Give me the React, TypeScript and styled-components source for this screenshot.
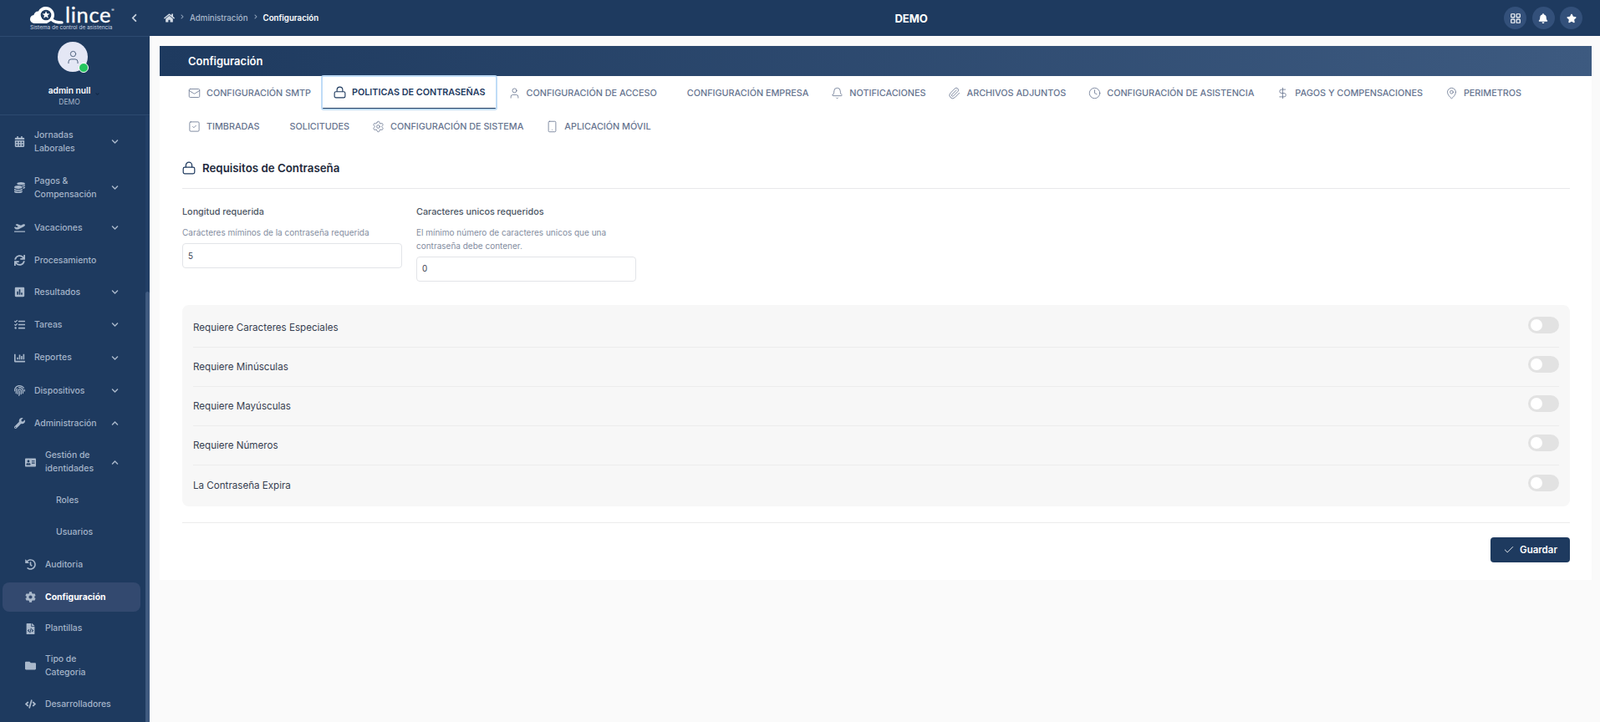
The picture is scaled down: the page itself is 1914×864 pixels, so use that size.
import React from 'react';
import styled, { createGlobalStyle } from 'styled-components';
import {
  Bell, Check, Clock, DollarSign, LayoutGrid, Mail, MapPin, Paperclip, Settings, Smartphone, SquareCheck, User,
} from 'lucide-react';
import {
  FaAddressCard, FaBell, FaCalendarAlt, FaChartBar, FaChevronDown, FaChevronLeft, FaChevronRight, FaChevronUp, FaCode, FaCog,
  FaCoins, FaFileCode, FaFingerprint, FaFolder, FaHistory, FaHome, FaPlaneDeparture, FaPoll, FaStar, FaSync, FaTasks, FaWrench,
} from 'react-icons/fa';

const GlobalStyle = createGlobalStyle`
  html, body { margin: 0; height: 100%; overflow: hidden; background: #fafafa; }
  * { box-sizing: border-box; }
  body { font-family: Inter, "Liberation Sans", sans-serif; }
`;

const Page = styled.div`
  width: 1914px;
  height: 864px;
  display: flex;
  flex-direction: column;
  overflow: hidden;
`;

// --- Top bar ---
const TopBar = styled.header`
  height: 43px;
  flex: none;
  background: #1e3a5f;
  display: flex;
  align-items: center;
  justify-content: space-between;
  padding-right: 21px;
`;

const TopLeft = styled.div`
  display: flex;
  align-items: center;
`;

const LogoBox = styled.div`
  width: 179px;
  padding-left: 36px;
  display: flex;
  flex-direction: column;
  position: relative;
  height: 43px;
`;

const LogoRow = styled.div`
  display: flex;
  align-items: flex-start;
  height: 29px;
  padding-top: 8px;
`;

const LogoWord = styled.span`
  font-family: Lato, sans-serif;
  font-weight: 400;
  font-size: 25.5px;
  line-height: 20px;
  letter-spacing: 0.7px;
  color: #fff;
  -webkit-text-stroke: 0.3px #fff;
  margin: -1px 0 0 2px;
`;

const LogoMark = styled.span`
  font-size: 5px;
  line-height: 6px;
  color: #fff;
  margin-top: 1px;
`;

const LogoTag = styled.span`
  font-size: 6.45px;
  line-height: 8px;
  color: #c9d3e0;
  white-space: nowrap;
`;

const CollapseBtn = styled.span`
  position: absolute;
  left: 155px;
  top: 16px;
  color: #c6d0dd;
  display: flex;
  font-size: 11px;
`;

const Crumbs = styled.nav`
  display: flex;
  align-items: center;
  margin-left: 17px;
  font-size: 9.7px;
  font-weight: 500;
  color: #a9b8cb;
`;

const CrumbSep = styled.span`
  display: flex;
  margin: 0 6px;
  font-size: 6px;
  color: #8da0b8;
  transform: translateY(-2px);
`;

const CrumbNow = styled.span`
  color: #fff;
  font-weight: 600;
`;

const HomeIcon = styled(FaHome)`
  font-size: 13px;
  color: #d4dce6;
`;

const TopTitle = styled.div`
  color: #fff;
  font-weight: 700;
  font-size: 13px;
`;

const TopActions = styled.div`
  display: flex;
  gap: 6.5px;
`;

const RoundBtn = styled.span`
  width: 27px;
  height: 27px;
  border-radius: 50%;
  background: #33507a;
  color: #fff;
  display: flex;
  align-items: center;
  justify-content: center;
  font-size: 12px;
`;

const Body = styled.div`
  flex: 1;
  display: flex;
  min-height: 0;
`;

// --- Sidebar ---
const Sidebar = styled.aside`
  width: 179px;
  flex: none;
  background: #1e3a5f;
  border-top: 1px solid #2d4a70;
  display: flex;
  flex-direction: column;
  position: relative;
  overflow: hidden;
`;

const ScrollTrack = styled.div`
  position: absolute;
  right: 0;
  top: 95px;
  bottom: 0;
  width: 5px;
  background: #223f66;
`;

const ScrollThumb = styled.div`
  position: absolute;
  left: 0;
  top: 210px;
  bottom: 0;
  width: 5px;
  background: #3f5a80;
  border-radius: 3px 3px 0 0;
`;

const UserBox = styled.div`
  height: 94px;
  flex: none;
  border-bottom: 1px solid #2d4a70;
  display: flex;
  flex-direction: column;
  align-items: center;
  padding: 6px 13px 0 0;
`;

const Avatar = styled.div`
  width: 36px;
  height: 36px;
  margin-left: 8px;
  border-radius: 50%;
  background: #e4e7f5;
  color: #475b78;
  display: flex;
  align-items: center;
  justify-content: center;
  position: relative;
`;

const OnlineDot = styled.span`
  position: absolute;
  right: -1px;
  bottom: -1px;
  width: 12px;
  height: 12px;
  border-radius: 50%;
  background: #22c55e;
  border: 1px solid #fff;
`;

const UserName = styled.div`
  margin-top: 15px;
  color: #fff;
  font-size: 10.2px;
  line-height: 14px;
  font-weight: 600;
  position: relative;
`;

const NameCaret = styled(FaChevronDown)`
  position: absolute;
  right: -11px;
  top: 9px;
  font-size: 5px;
  color: #0f2440;
`;

const UserOrg = styled.div`
  color: #a9b8cb;
  font-size: 8.5px;
  line-height: 14px;
`;

const Menu = styled.nav`
  padding-top: 4px;
  display: flex;
  flex-direction: column;
`;

const MenuItem = styled.div<{ $level?: number; $h: number; $active?: boolean }>`
  height: ${p => p.$h}px;
  flex: none;
  display: flex;
  align-items: center;
  padding-left: ${p => (p.$level === 2 ? 67 : p.$level === 1 ? 29 : 16)}px;
  color: ${p => (p.$active ? '#fff' : '#a4b4c9')};
  font-size: 10.4px;
  line-height: 16px;
  font-weight: ${p => (p.$active ? 700 : 500)};
  position: relative;
`;

const ActiveBg = styled.span`
  position: absolute;
  left: 3px;
  top: 2px;
  bottom: 2px;
  width: 165px;
  background: #33496f;
  border-radius: 8px;
`;

const MenuIcon = styled.span`
  width: 14px;
  height: 14px;
  margin-right: 11px;
  display: flex;
  align-items: center;
  justify-content: center;
  font-size: 13px;
  color: #a9b8cb;
  flex: none;
  position: relative;
`;

const MenuLabel = styled.span`
  position: relative;
  white-space: pre-line;
`;

const MenuCaret = styled.span`
  position: absolute;
  left: 133px;
  top: 50%;
  margin-top: -4.5px;
  display: flex;
  font-size: 9px;
  color: #a9b8cb;
`;

// --- Main area ---
const Main = styled.main`
  flex: 1;
  padding: 12px 10px 0 12px;
  background: #fafafa;
`;

const Card = styled.section`
  background: #fff;
  height: 639px;
`;

const CardHeader = styled.div`
  height: 36px;
  padding-left: 34px;
  display: flex;
  align-items: center;
  color: #fff;
  font-size: 13px;
  font-weight: 600;
  background: linear-gradient(90deg, #1e3a5f 0%, #3d5a80 100%);
`;

const TabBar = styled.div`
  display: flex;
  flex-wrap: wrap;
  padding-left: 20.5px;
`;

const Tab = styled.div<{ $active?: boolean }>`
  height: 40px;
  padding: 0 13.5px;
  display: flex;
  align-items: center;
  gap: 7px;
  font-size: 10.8px;
  white-space: nowrap;
  color: ${p => (p.$active ? '#1e3a5f' : '#66748f')};
  font-weight: ${p => (p.$active ? 600 : 500)};
  ${p => p.$active && `
    outline: 2px solid #bfdcf7;
    outline-offset: -1px;
    border-bottom: 2px solid #1e3a5f;
    border-radius: 2px;
  `}
`;

const NoIconGap = styled.span`
  width: 2px;
`;

const Content = styled.div`
  padding: 0 26px 0 27px;
  margin-top: 10px;
`;

const SectionTitle = styled.h3`
  margin: 0;
  height: 45px;
  padding-bottom: 4px;
  display: flex;
  align-items: center;
  gap: 8px;
  font-size: 13.3px;
  font-weight: 600;
  color: #1e293b;
  border-bottom: 1px solid #e8e8ea;
`;

const FieldRow = styled.div`
  display: flex;
  gap: 17px;
  margin-top: 20px;
  align-items: flex-start;
`;

const Field = styled.div`
  width: 263px;
`;

const FieldLabel = styled.label`
  display: block;
  font-size: 10.8px;
  line-height: 16px;
  font-weight: 500;
  color: #4b5563;
`;

const FieldHint = styled.p`
  margin: 9px 0 4.5px;
  font-size: 10px;
  line-height: 15.5px;
  color: #838da0;
`;

const NumberInput = styled.input`
  display: block;
  width: 100%;
  height: 30px;
  padding: 0 6px;
  border: 1px solid #e2e4e8;
  border-radius: 4px;
  background: #fff;
  color: #374151;
  font: 400 9.8px Inter, sans-serif;
  outline: none;
`;

const TogglePanel = styled.div`
  margin-top: 28.5px;
  background: #f7f7f7;
  border-radius: 8px;
  padding: 4px 13px 2px;
`;

const ToggleRow = styled.div`
  height: 47px;
  display: flex;
  align-items: center;
  justify-content: space-between;
  font-size: 11.6px;
  color: #374151;
  border-bottom: 1px solid #ececec;
  &:last-child { border-bottom: none; }
`;

const Switch = styled.span`
  width: 37px;
  height: 20px;
  margin-top: -6px;
  border-radius: 10px;
  background: #e2e2e2;
  position: relative;
  &::after {
    content: '';
    position: absolute;
    left: 3px;
    top: 3px;
    width: 14px;
    height: 14px;
    border-radius: 50%;
    background: #fff;
  }
`;

const Footer = styled.div`
  margin-top: 19px;
  border-top: 1px solid #ececec;
  padding-top: 17px;
  display: flex;
  justify-content: flex-end;
`;

const SaveButton = styled.button`
  width: 95px;
  height: 30px;
  border: none;
  border-radius: 4px;
  background: #1e3a5f;
  color: #fff;
  font: 600 11.5px Inter, sans-serif;
  display: flex;
  align-items: center;
  justify-content: center;
  gap: 6px;
`;

const LockGlyph: React.FC<{ size: number; color?: string }> = ({ size, color = 'currentColor' }) => (
  <svg width={size} height={size} viewBox="0 0 16 16" fill="none" stroke={color} strokeWidth="1.2">
    <rect x="1.2" y="7.2" width="13.6" height="7.6" rx="1.8" />
    <path d="M4.4 7.2V4.8a3.6 3.6 0 0 1 7.2 0v2.4" />
  </svg>
);

const CloudLogo = () => (
  <svg width="40" height="21" viewBox="0 0 40 21">
    <path fill="#fff" d="M5.5 20C2.5 20 0 17.8 0 15c0-2.6 1.9-4.6 4.4-4.9C5 7.2 7.3 5.2 10 5.4 11.5 2 15 0 19 0c5.500 0 10 4.500 10 10 0 2-.6 3.800-1.600 5.400L20 20z" />
    <circle cx="19" cy="10" r="6.300" fill="#1e3a5f" />
    <path fill="#fff" d="M19 5.300l1.300 3 3.200.2-2.500 2 .9 3.200-2.900-1.800-2.800 1.800.8-3.200-2.500-2 3.300-.2z" />
    <path d="M26 15.500c2.500 2.600 6 3.400 12 3.400" stroke="#fff" strokeWidth="3.400" fill="none" strokeLinecap="round" />
  </svg>
);

const tabs: { label: string; icon?: React.ReactNode; active?: boolean }[] = [
  { label: 'CONFIGURACIÓN SMTP', icon: <Mail size={15} strokeWidth={1.3} /> },
  { label: 'POLITICAS DE CONTRASEÑAS', icon: <LockGlyph size={15} />, active: true },
  { label: 'CONFIGURACIÓN DE ACCESO', icon: <User size={15} strokeWidth={1.3} /> },
  { label: 'CONFIGURACIÓN EMPRESA' },
  { label: 'NOTIFICACIONES', icon: <Bell size={15} strokeWidth={1.3} /> },
  { label: 'ARCHIVOS ADJUNTOS', icon: <Paperclip size={15} strokeWidth={1.3} /> },
  { label: 'CONFIGURACIÓN DE ASISTENCIA', icon: <Clock size={15} strokeWidth={1.3} /> },
  { label: 'PAGOS Y COMPENSACIONES', icon: <DollarSign size={15} strokeWidth={1.3} /> },
  { label: 'PERIMETROS', icon: <MapPin size={15} strokeWidth={1.3} /> },
  { label: 'TIMBRADAS', icon: <SquareCheck size={15} strokeWidth={1.3} /> },
  { label: 'SOLICITUDES' },
  { label: 'CONFIGURACIÓN DE SISTEMA', icon: <Settings size={15} strokeWidth={1.3} /> },
  { label: 'APLICACIÓN MÓVIL', icon: <Smartphone size={15} strokeWidth={1.3} /> },
];

type Entry = {
  label: string;
  h: number;
  icon?: React.ReactNode;
  caret?: 'up' | 'down';
  level?: number;
  active?: boolean;
};

const menu: Entry[] = [
  { label: 'Jornadas\nLaborales', h: 55, icon: <FaCalendarAlt />, caret: 'down' },
  { label: 'Pagos &\nCompensación', h: 55, icon: <FaCoins />, caret: 'down' },
  { label: 'Vacaciones', h: 41, icon: <FaPlaneDeparture />, caret: 'down' },
  { label: 'Procesamiento', h: 37, icon: <FaSync /> },
  { label: 'Resultados', h: 39, icon: <FaPoll />, caret: 'down' },
  { label: 'Tareas', h: 39, icon: <FaTasks />, caret: 'down' },
  { label: 'Reportes', h: 40, icon: <FaChartBar />, caret: 'down' },
  { label: 'Dispositivos', h: 39, icon: <FaFingerprint />, caret: 'down' },
  { label: 'Administración', h: 39, icon: <FaWrench />, caret: 'up' },
  { label: 'Gestión de\nidentidades', h: 54, icon: <FaAddressCard />, caret: 'up', level: 1 },
  { label: 'Roles', h: 38, level: 2 },
  { label: 'Usuarios', h: 38, level: 2 },
  { label: 'Auditoria', h: 39, icon: <FaHistory />, level: 1 },
  { label: 'Configuración', h: 39, icon: <FaCog />, level: 1, active: true },
  { label: 'Plantillas', h: 36, icon: <FaFileCode />, level: 1 },
  { label: 'Tipo de\nCategoria', h: 53, icon: <FaFolder />, level: 1 },
  { label: 'Desarrolladores', h: 39, icon: <FaCode />, level: 1 },
];

const rules = [
  'Requiere Caracteres Especiales',
  'Requiere Minúsculas',
  'Requiere Mayúsculas',
  'Requiere Números',
  'La Contraseña Expira',
];

const App: React.FC = () => (
  <Page>
    <GlobalStyle />
    <TopBar>
      <TopLeft>
        <LogoBox>
          <LogoRow>
            <CloudLogo />
            <LogoWord>lince</LogoWord>
            <LogoMark>®</LogoMark>
          </LogoRow>
          <LogoTag>Sistema de control de asistencia</LogoTag>
          <CollapseBtn><FaChevronLeft /></CollapseBtn>
        </LogoBox>
        <Crumbs>
          <HomeIcon />
          <CrumbSep><FaChevronRight /></CrumbSep>
          <span>Administración</span>
          <CrumbSep><FaChevronRight /></CrumbSep>
          <CrumbNow>Configuración</CrumbNow>
        </Crumbs>
      </TopLeft>
      <TopTitle>DEMO</TopTitle>
      <TopActions>
        <RoundBtn><LayoutGrid size={14} /></RoundBtn>
        <RoundBtn><FaBell /></RoundBtn>
        <RoundBtn><FaStar /></RoundBtn>
      </TopActions>
    </TopBar>
    <Body>
      <Sidebar>
        <ScrollTrack><ScrollThumb /></ScrollTrack>
        <UserBox>
          <Avatar>
            <User size={19} strokeWidth={1.2} />
            <OnlineDot />
          </Avatar>
          <UserName>admin null<NameCaret /></UserName>
          <UserOrg>DEMO</UserOrg>
        </UserBox>
        <Menu>
          {menu.map(item => (
            <MenuItem key={item.label} $level={item.level} $h={item.h} $active={item.active}>
              {item.active && <ActiveBg />}
              {item.icon && <MenuIcon>{item.icon}</MenuIcon>}
              <MenuLabel>{item.label}</MenuLabel>
              {item.caret && (
                <MenuCaret>{item.caret === 'up' ? <FaChevronUp /> : <FaChevronDown />}</MenuCaret>
              )}
            </MenuItem>
          ))}
        </Menu>
      </Sidebar>
      <Main>
        <Card>
          <CardHeader>Configuración</CardHeader>
          <TabBar>
            {tabs.map(tab => (
              <Tab key={tab.label} $active={tab.active}>
                {tab.icon ?? <NoIconGap />}
                {tab.label}
              </Tab>
            ))}
          </TabBar>
          <Content>
            <SectionTitle>
              <LockGlyph size={16} color="#1e3a5f" />
              Requisitos de Contraseña
            </SectionTitle>
            <FieldRow>
              <Field>
                <FieldLabel>Longitud requerida</FieldLabel>
                <FieldHint>Carácteres míminos de la contraseña requerida</FieldHint>
                <NumberInput readOnly value="5" />
              </Field>
              <Field>
                <FieldLabel>Caracteres unicos requeridos</FieldLabel>
                <FieldHint>El mínimo número de caracteres unicos que una contraseña debe contener.</FieldHint>
                <NumberInput readOnly value="0" />
              </Field>
            </FieldRow>
            <TogglePanel>
              {rules.map(rule => (
                <ToggleRow key={rule}>
                  {rule}
                  <Switch />
                </ToggleRow>
              ))}
            </TogglePanel>
            <Footer>
              <SaveButton><Check size={14} strokeWidth={1.5} />Guardar</SaveButton>
            </Footer>
          </Content>
        </Card>
      </Main>
    </Body>
  </Page>
);

export default App;
